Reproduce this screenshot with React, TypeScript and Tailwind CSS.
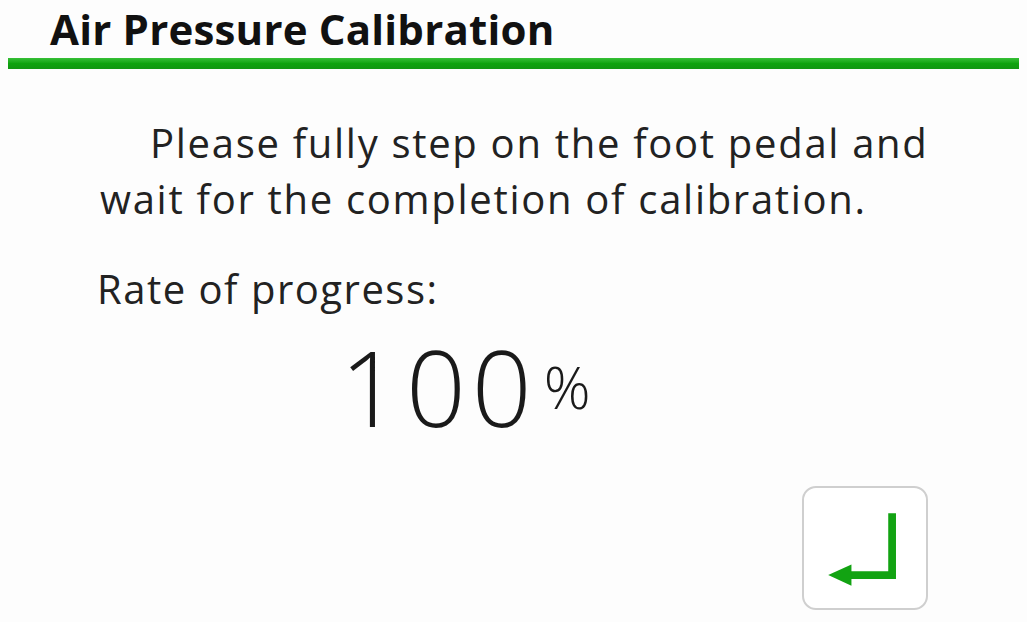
export default function App() {
  return (
    <div
      className="flex h-[622px] w-[1027px] flex-col overflow-hidden bg-[#fdfdfd] text-[#1a1a1a]"
      style={{ fontFamily: '"Open Sans", "Noto Sans", sans-serif' }}
    >
      <header className="flex h-[58px] items-start px-[50px]">
        <h1 className="text-[42px] leading-[58px] font-bold tracking-[0.2px] text-[#111]">Air Pressure Calibration</h1>
      </header>
      <div className="mx-[8px] h-[11px] bg-gradient-to-b from-[#35c035] via-[#0fa30f] to-[#129612]" />

      <main className="flex flex-1 flex-col pl-[97px]">
        <p className="mt-[46px] w-[880px] text-[40px] leading-[56px] tracking-[1.7px] text-[#222]">
          <span className="pl-[53px]">Please fully step on the foot pedal and</span>
          <br />
          <span className="pl-[3px]">wait for the completion of calibration.</span>
        </p>

        <p className="mt-[34px] text-[40px] leading-[56px] tracking-[1.5px] text-[#222]">Rate of progress:</p>

        <div className="mt-[10px] flex items-start pl-[243px]">
          <span className="text-[105px] leading-[120px] font-light tracking-[6px]">100</span>
          <span className="mt-[24px] ml-[6px] text-[58px] leading-[72px] font-light">%</span>
        </div>

        <div className="mt-auto mb-[12px] mr-[99px] flex justify-end">
          <button className="flex h-[124px] w-[126px] items-center justify-center rounded-[14px] border-2 border-[#cfcfcf] bg-white">
            <svg width="126" height="124" viewBox="0 0 126 124">
              <path d="M91 26 V90 H46" fill="none" stroke="#12a312" strokeWidth="8" />
              <path d="M25 90 L49 79 L49 101 Z" fill="#12a312" />
            </svg>
          </button>
        </div>
      </main>
    </div>
  );
}
